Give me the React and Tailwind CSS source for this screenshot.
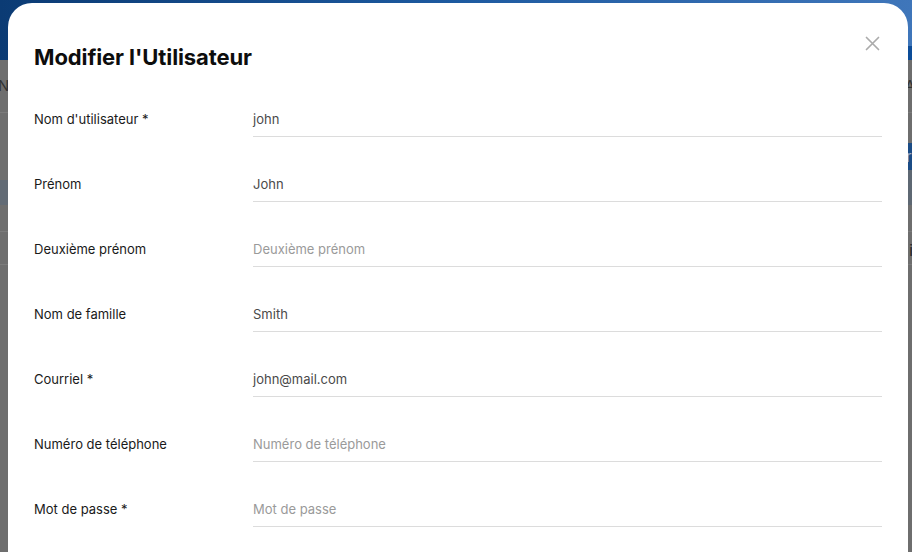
export default function App() {
  const rows = [
    { label: "Nom d'utilisateur *", value: "john" },
    { label: "Prénom", value: "John" },
    { label: "Deuxième prénom", placeholder: "Deuxième prénom" },
    { label: "Nom de famille", value: "Smith" },
    { label: "Courriel *", value: "john@mail.com" },
    { label: "Numéro de téléphone", placeholder: "Numéro de téléphone" },
    { label: "Mot de passe *", placeholder: "Mot de passe" },
  ];
  return (
    <div
      className="relative w-[912px] h-[552px] overflow-hidden bg-[#6e6e6e]"
      style={{ fontFamily: "Inter, 'Noto Sans', sans-serif" }}
    >
      {/* dimmed background page */}
      <div className="flex flex-col text-[#333] text-[15px]">
        <div className="h-[60px] bg-gradient-to-r from-[#0b3b74] via-[#1d5aa0] to-[#3f76ba] flex flex-col justify-end">
          <div className="h-[14px] flex justify-end">
            <div className="w-[12px] bg-[#0c4c98]" />
          </div>
        </div>
        <div className="h-[53px] border-b border-[#7b7b7b] flex items-center justify-between">
          <span className="-ml-[2px]">N</span>
          <span className="-mr-[3px]">A</span>
        </div>
        <div className="h-[30px] flex justify-end">
          <div className="w-[12px] bg-[#6e6e6e]" />
        </div>
        <div className="h-[27px] flex justify-between">
          <div className="w-[12px]" />
          <div className="w-[12px] bg-[#1b4c86] text-[#9fb3cc] text-[15px] leading-[27px] pl-[6px]">r</div>
        </div>
        <div className="h-[10px] flex justify-between">
          <div className="w-[12px]" />
          <div className="w-[12px] bg-[#5e6873]" />
        </div>
        <div className="h-[25px] flex justify-between">
          <div className="w-[12px] bg-[#626b75]" />
          <div className="w-[12px] bg-[#5e6873]" />
        </div>
        <div className="h-[27px] border-b border-[#7b7b7b]" />
        <div className="h-[33px] border-b border-[#7b7b7b] flex items-center justify-end">
          <span className="text-[#222] -mr-[1px] mt-[6px]">i</span>
        </div>
      </div>

      {/* modal */}
      <div className="absolute left-[8px] top-[3px] w-[900px] h-[620px] bg-white rounded-t-[24px] px-[26px] pt-[40px]">
        <button className="absolute right-[28px] top-[32px] w-[16px] h-[16px] flex items-center justify-center">
          <svg width="15" height="15" viewBox="0 0 15 15" fill="none">
            <path d="M1.5 1.5 L13.5 13.5 M13.5 1.5 L1.5 13.5" stroke="#ababab" strokeWidth="1.7" strokeLinecap="round" />
          </svg>
        </button>
        <h2 className="text-[22px] leading-[28px] font-bold text-[#0d0d0d] tracking-[-0.1px]">
          Modifier l'Utilisateur
        </h2>
        <div className="mt-[32px] flex flex-col gap-[31px]">
          {rows.map((r) => (
            <div key={r.label} className="flex items-center h-[34px]">
              <div className="w-[219px] text-[13px] text-[#1a1a1a]">{r.label}</div>
              <div className="flex-1 h-[34px] border-b border-[#dcdcdc] flex items-center text-[13px]">
                {r.value ? (
                  <span className="text-[#4a4a4a]">{r.value}</span>
                ) : (
                  <span className="text-[#9a9a9a]">{r.placeholder}</span>
                )}
              </div>
            </div>
          ))}
        </div>
      </div>
    </div>
  );
}
